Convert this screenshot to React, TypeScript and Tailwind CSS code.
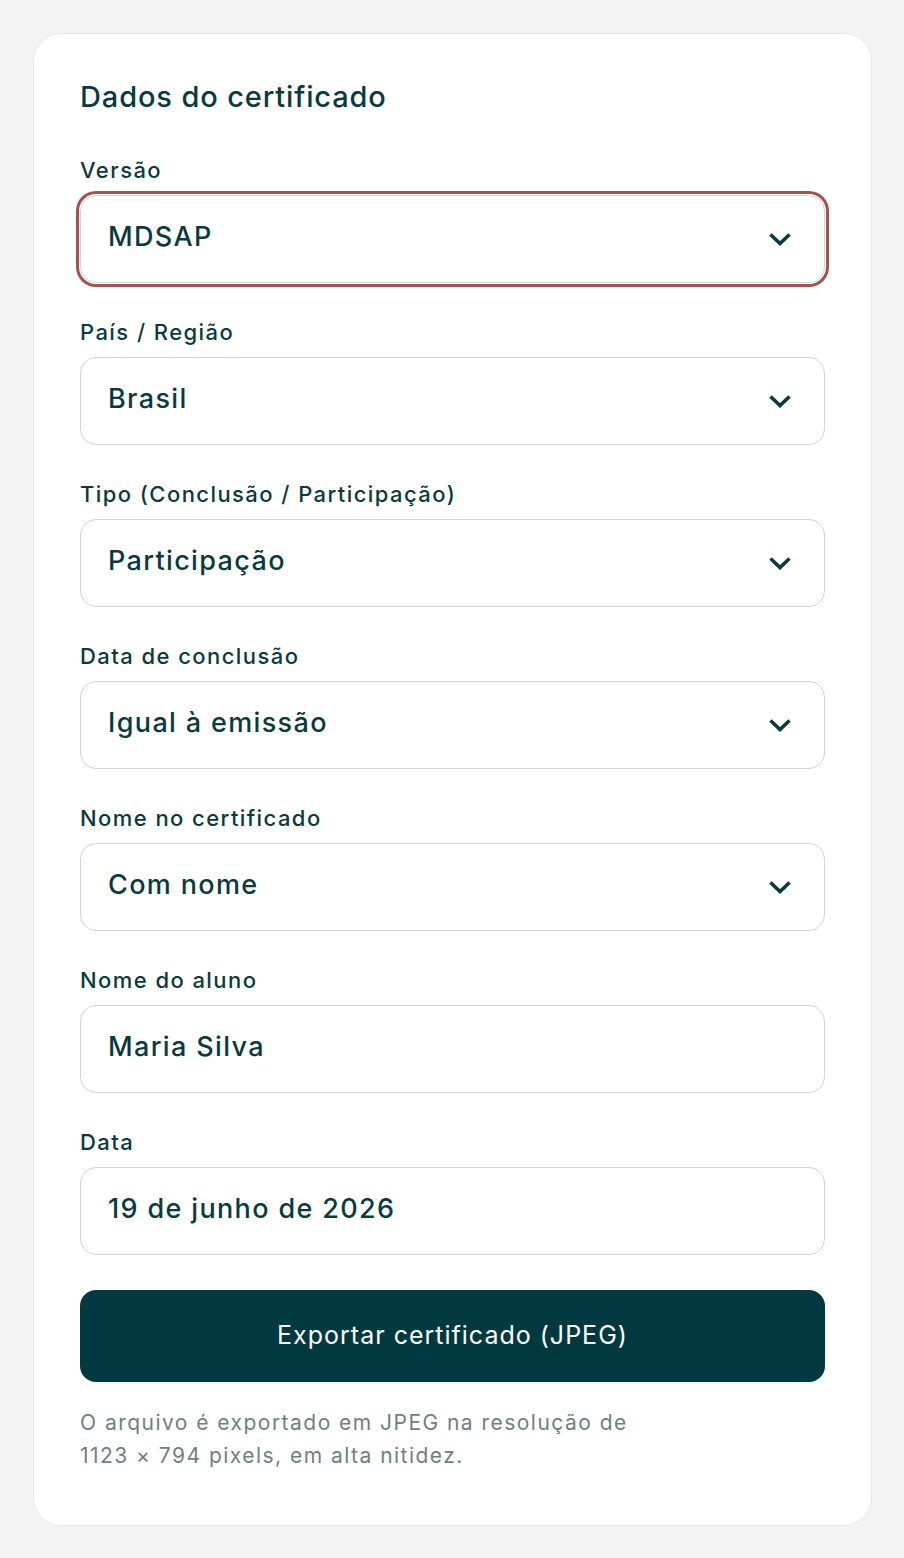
import type { ReactNode } from "react";

const fields = [
  { label: "Versão", value: "MDSAP", select: true, focused: true },
  { label: "País / Região", value: "Brasil", select: true },
  { label: "Tipo (Conclusão / Participação)", value: "Participação", select: true },
  { label: "Data de conclusão", value: "Igual à emissão", select: true },
  { label: "Nome no certificado", value: "Com nome", select: true },
  { label: "Nome do aluno", value: "Maria Silva", select: false },
  { label: "Data", value: "19 de junho de 2026", select: false },
];

const Chevron = () => (
  <svg width="24" height="16" viewBox="0 0 24 16" fill="none" className="shrink-0">
    <path d="M2.5 3.5 L12 12.5 L21.5 3.5" stroke="#0a3a40" strokeWidth="3.6" strokeLinecap="butt" strokeLinejoin="miter" />
  </svg>
);

const Field = ({ label, children }: { label: string; children: ReactNode }) => (
  <div className="flex flex-col">
    <label className="text-[22px] leading-[28px] font-medium tracking-[0.065em] text-[#0a3a40]">{label}</label>
    <div className="mt-[11px]">{children}</div>
  </div>
);

export default function App() {
  return (
    <div className="min-h-screen bg-[#f3f3f3] px-[33px] pt-[33px] pb-[32px] font-['Inter','Open_Sans',sans-serif]">
      <div className="w-[839px] rounded-[28px] border border-[#e8e8e8] bg-white px-[46px] pt-[46px] pb-[53px]">
        <h2 className="text-[29px] leading-[34px] font-medium tracking-[0.03em] text-[#0a3a40]">Dados do certificado</h2>

        <div className="mt-[42px] flex flex-col gap-[35px]">
          {fields.map((f) => (
            <Field key={f.label} label={f.label}>
              <div
                className={`flex h-[88px] items-center justify-between rounded-[16px] border border-[#d4d4d4] bg-white pl-[27px] pr-[32px] ${
                  f.focused ? "ring-[3px] ring-[#a35252] ring-offset-1 ring-offset-white" : ""
                }`}
              >
                <span className="-mt-[4px] text-[27px] font-medium tracking-[0.05em] text-[#0a3a40]">{f.value}</span>
                {f.select && <Chevron />}
              </div>
            </Field>
          ))}
        </div>

        <button className="mt-[35px] flex h-[92px] w-full items-center justify-center rounded-[16px] bg-[#003a40] text-[25px] tracking-[0.04em] text-white">
          Exportar certificado (JPEG)
        </button>

        <p className="mt-[24px] text-[21px] leading-[33px] tracking-[0.07em] text-[#6e7f81]">
          O arquivo é exportado em JPEG na resolução de
          <br />
          1123 × 794 pixels, em alta nitidez.
        </p>
      </div>
    </div>
  );
}
